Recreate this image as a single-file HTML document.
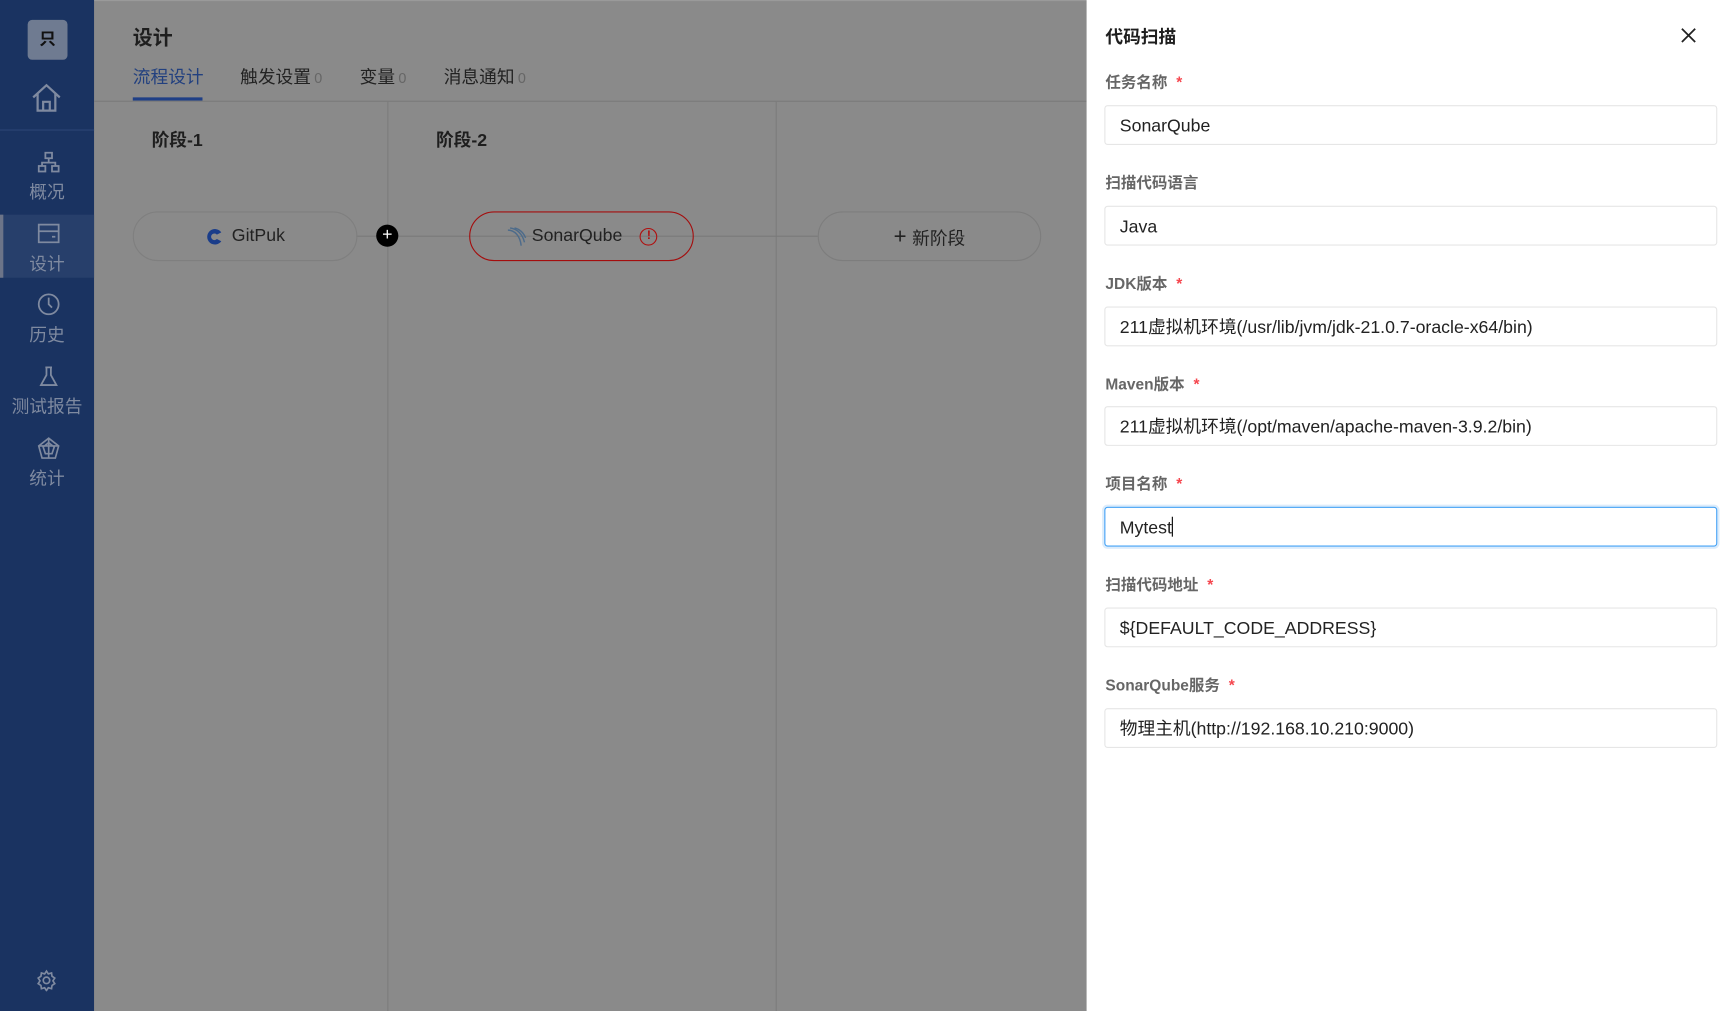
<!DOCTYPE html>
<html><head><meta charset="utf-8"><style>
*{margin:0;padding:0;box-sizing:border-box}
html,body{width:1735px;height:1011px;overflow:hidden;background:#8a8a8a;font-family:"Liberation Sans","Noto Sans CJK SC",sans-serif}
#w{position:absolute;left:0;top:0;width:1568px;height:914px;transform:scale(1.10651);transform-origin:0 0;background:#8a8a8a}
.a{position:absolute;white-space:nowrap}
.sb{left:0;top:0;width:85px;height:914px;background:#1a3361}
.nav{left:0;width:85px;text-align:center;color:#7f8aa0;font-size:16px}
.lbl{left:999px;font-size:14px;font-weight:bold;color:#666}
.lbl i{color:#f5474f;font-style:normal;margin-left:8px}
.in{left:998px;width:554px;height:36px;border:1px solid #e6e6e6;border-radius:3px;padding-left:13px;padding-top:2px;line-height:34px;font-size:16px;color:#222}
.pill{height:45px;border-radius:23px;border:1px solid #7f7f7f;top:191px;width:203px;display:flex;align-items:center;justify-content:center;font-size:16px;color:#222}
</style></head><body><div id="w">
<div class="a" style="left:0;top:0;width:1568px;height:1px;background:#9a9a9a"></div>
<div class="a sb"></div>
<div class="a" style="left:25px;top:18px;width:36px;height:36px;border-radius:4px;background:#6f7b91;color:#111;text-align:center;line-height:36px;font-size:15px;font-weight:bold">只</div>
<svg class="a" style="left:27px;top:73px" width="30" height="30" viewBox="0 0 30 30" fill="none" stroke="#7f8aa0" stroke-width="2"><path d="M3 15 L15 4 L27 15 M7 12 V27 H23 V12 M12 27 V19 H18 V27"/></svg>
<div class="a" style="left:0;top:117px;width:85px;height:1px;background:#2c4575"></div>
<svg class="a" style="left:34px;top:137px" width="20" height="20" viewBox="0 0 20 20" fill="none" stroke="#7f8aa0" stroke-width="1.6"><rect x="7" y="1" width="6" height="5"/><rect x="1" y="13" width="6" height="5"/><rect x="13" y="13" width="6" height="5"/><path d="M10 6V10M4 13V10H16V13"/></svg>
<div class="a nav" style="top:160px">概况</div>
<div class="a" style="left:0;top:194px;width:85px;height:57px;background:#273f6b;border-left:3px solid #6c7488"></div>
<svg class="a" style="left:34px;top:202px" width="20" height="18" viewBox="0 0 20 18" fill="none" stroke="#7f8aa0" stroke-width="1.6"><rect x="1" y="1" width="18" height="16"/><path d="M1 7H19M13 12H16"/></svg>
<div class="a nav" style="top:225px">设计</div>
<svg class="a" style="left:33px;top:264px" width="22" height="22" viewBox="0 0 22 22" fill="none" stroke="#7f8aa0" stroke-width="1.6"><circle cx="11" cy="11" r="9"/><path d="M11 5V11L14 14"/></svg>
<div class="a nav" style="top:289px">历史</div>
<svg class="a" style="left:34px;top:330px" width="20" height="20" viewBox="0 0 20 20" fill="none" stroke="#7f8aa0" stroke-width="1.6"><path d="M7 2H13M8 2V9L3 18H17L12 9V2"/></svg>
<div class="a nav" style="top:354px">测试报告</div>
<svg class="a" style="left:33px;top:394px" width="22" height="22" viewBox="0 0 22 22" fill="none" stroke="#7f8aa0" stroke-width="1.5"><path d="M11 2L20 9L17 20H5L2 9Z M11 6L16 10L14 16H8L6 10Z M11 2V20M2 9L20 9"/></svg>
<div class="a nav" style="top:419px">统计</div>
<svg class="a" style="left:32px;top:876px" width="20" height="20" viewBox="0 0 24 24" fill="none" stroke="#7f8aa0" stroke-width="1.8"><circle cx="12" cy="12" r="3.5"/><path d="M12 2l2 3 3.5-1 .5 3.5 3 2-2 3 2 3-3 2-.5 3.5-3.5-1-2 3-2-3-3.5 1-.5-3.5-3-2 2-3-2-3 3-2 .5-3.5 3.5 1z"/></svg>

<div class="a" style="left:120px;top:20px;font-size:18px;font-weight:bold;color:#1e1e1e">设计</div>
<div class="a" style="left:120px;top:56px;font-size:16px;color:#22407f">流程设计</div>
<div class="a" style="left:120px;top:88px;width:63px;height:3px;background:#1f3f86"></div>
<div class="a" style="left:217px;top:56px;font-size:16px;color:#222">触发设置<span style="font-size:13px;color:#666;margin-left:3px">0</span></div>
<div class="a" style="left:325px;top:56px;font-size:16px;color:#222">变量<span style="font-size:13px;color:#666;margin-left:3px">0</span></div>
<div class="a" style="left:401px;top:56px;font-size:16px;color:#222">消息通知<span style="font-size:13px;color:#666;margin-left:3px">0</span></div>
<div class="a" style="left:85px;top:91px;width:897px;height:1px;background:#7a7a7a"></div>
<div class="a" style="left:350px;top:92px;width:1px;height:822px;background:#7c7c7c"></div>
<div class="a" style="left:701px;top:92px;width:1px;height:822px;background:#7c7c7c"></div>
<div class="a" style="left:137px;top:113px;font-size:16px;font-weight:bold;color:#1e1e1e">阶段-1</div>
<div class="a" style="left:394px;top:113px;font-size:16px;font-weight:bold;color:#1e1e1e">阶段-2</div>
<div class="a" style="left:322px;top:213px;width:417px;height:1px;background:#7a7a7a"></div>
<div class="a pill" style="left:120px"><svg width="18" height="18" viewBox="0 0 18 18" style="margin-right:6px"><path d="M15 5A7 7 0 1 0 15 13L11 11A3 3 0 1 1 11 7Z" fill="#1a3d8a"/></svg>GitPuk</div>
<div class="a" style="left:340px;top:203px;width:20px;height:20px;border-radius:50%;background:#000;color:#fff;text-align:center;line-height:19px;font-size:16px">+</div>
<div class="a pill" style="left:424px;border-color:#a40d0d"><svg width="20" height="18" viewBox="0 0 20 18" fill="none" stroke="#4d6b8a" stroke-width="1.3" style="margin-right:4px"><path d="M2 3C8 3 13 8 14 17M4 1C10 2 15 6 17 14M8 1C12 2 16 5 18 10"/></svg>SonarQube<span style="margin-left:16px;width:16px;height:16px;border:1.5px solid #b01010;border-radius:50%;color:#b01010;font-size:11px;line-height:13px;text-align:center;font-weight:bold">!</span></div>
<div class="a pill" style="left:739px;border-color:#7d7d7d;width:202px"><span style="font-size:20px;margin-right:5px;line-height:1">+</span>新阶段</div>

<div class="a" style="left:982px;top:0;width:586px;height:914px;background:#fff"></div>
<div class="a" style="left:999px;top:20px;font-size:16px;font-weight:bold;color:#1e1e1e">代码扫描</div>
<svg class="a" style="left:1519px;top:25px" width="14" height="14" viewBox="0 0 14 14" stroke="#222" stroke-width="1.6"><path d="M1 1L13 13M13 1L1 13"/></svg>

<div class="a lbl" style="top:64px">任务名称<i>*</i></div>
<div class="a in" style="top:95px">SonarQube</div>
<div class="a lbl" style="top:155px">扫描代码语言</div>
<div class="a in" style="top:186px">Java</div>
<div class="a lbl" style="top:246px">JDK版本<i>*</i></div>
<div class="a in" style="top:277px">211虚拟机环境(/usr/lib/jvm/jdk-21.0.7-oracle-x64/bin)</div>
<div class="a lbl" style="top:337px">Maven版本<i>*</i></div>
<div class="a in" style="top:367px">211虚拟机环境(/opt/maven/apache-maven-3.9.2/bin)</div>
<div class="a lbl" style="top:427px">项目名称<i>*</i></div>
<div class="a in" style="top:458px;border:1px solid #40a0f5;box-shadow:0 0 0 2px #dcecfb">Mytest<span style="display:inline-block;width:1px;height:18px;background:#000;vertical-align:-3px"></span></div>
<div class="a lbl" style="top:518px">扫描代码地址<i>*</i></div>
<div class="a in" style="top:549px">${DEFAULT_CODE_ADDRESS}</div>
<div class="a lbl" style="top:609px">SonarQube服务<i>*</i></div>
<div class="a in" style="top:640px">物理主机(http://192.168.10.210:9000)</div>
</div></body></html>
